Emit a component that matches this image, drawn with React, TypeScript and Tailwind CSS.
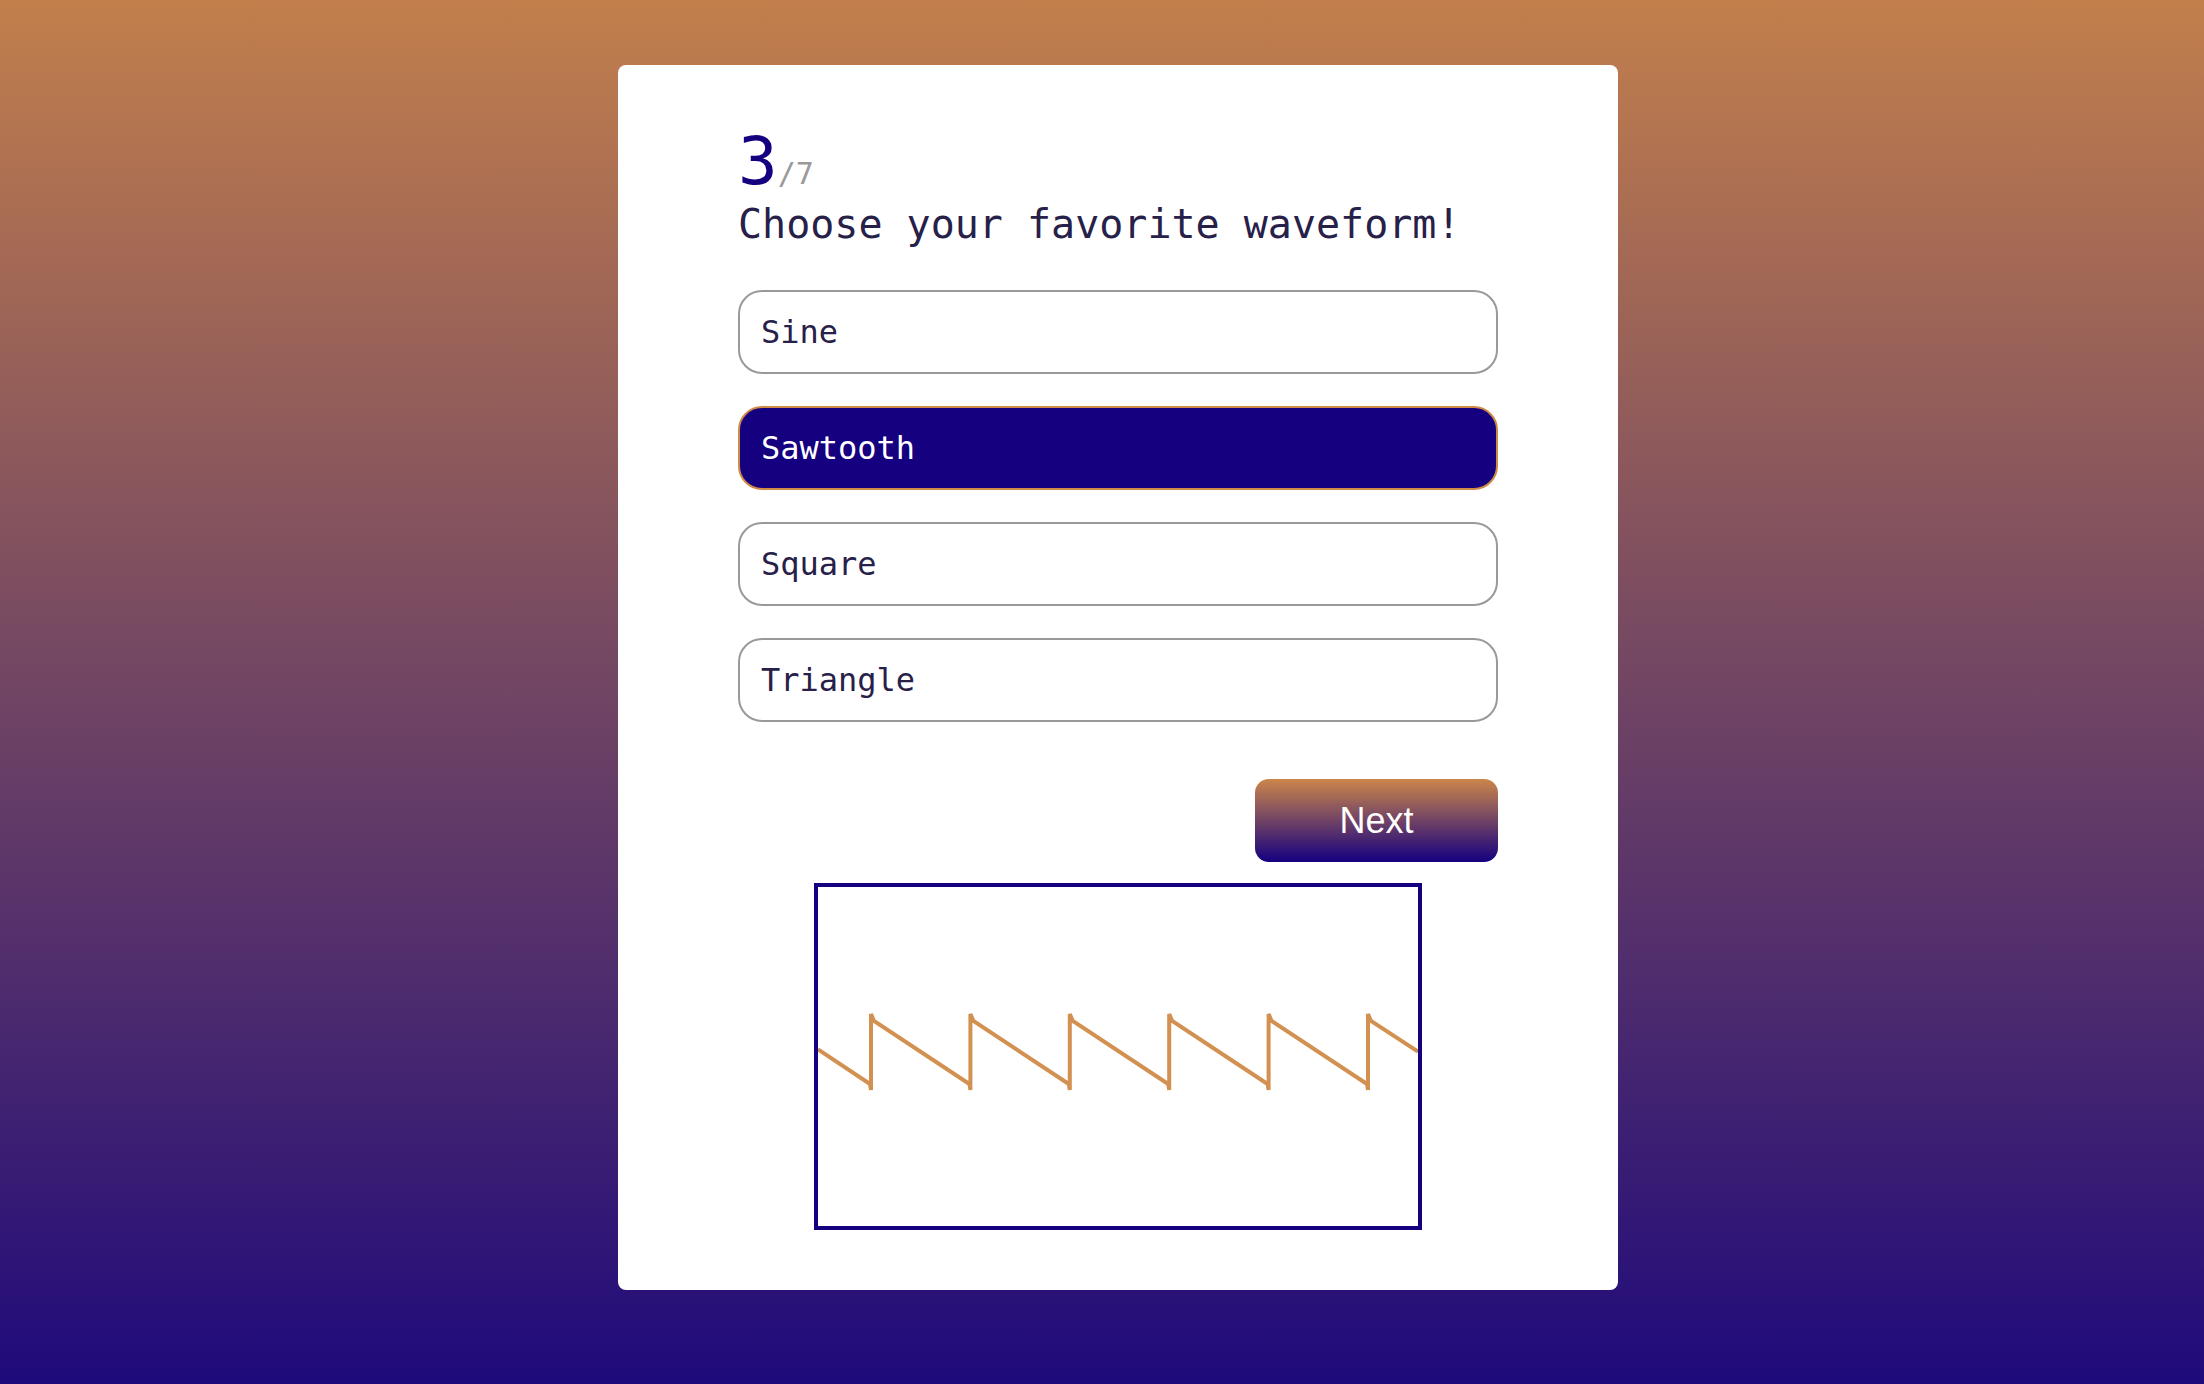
import { useState } from "react";

const OPTIONS = ["Sine", "Sawtooth", "Square", "Triangle"] as const;

// sawtooth trace, drawn in the 600x339 inner area of the scope box
function sawPath() {
  const period = 99.4;
  const first = 53;
  const top = 132;
  const bottom = 197;
  const slope = (bottom - top) / period;
  let d = `M0,${(bottom - first * slope).toFixed(1)}`;
  for (let i = 0; i < 6; i++) {
    const x = first + i * period;
    d += ` L${(x - 1).toFixed(1)},${bottom} L${x.toFixed(1)},${bottom + 6}`;
    d += ` L${x.toFixed(1)},${top - 5} L${(x + 3).toFixed(1)},${top + 2}`;
  }
  const last = first + 5 * period;
  d += ` L600,${(top + (600 - last) * slope).toFixed(1)}`;
  return d;
}

export default function App() {
  const [selected, setSelected] = useState<string>("Sawtooth");

  return (
    <div className="min-h-screen w-full bg-[linear-gradient(to_bottom,#c27f4c,#1f0a7b)] flex justify-center pl-[32px] pt-[65px] pb-[94px]">
      <div className="w-[1000px] bg-white rounded-[8px] px-[120px] pt-[64px] pb-[60px] flex flex-col">
        <div className="leading-[66px] text-[66px] font-['DejaVu_Sans_Mono',monospace] text-[#150080]">
          3<span className="text-[30px] leading-none text-[#9a9a9a]">/7</span>
        </div>
        <h1 className="mt-[9px] text-[40px] leading-none font-['DejaVu_Sans_Mono',monospace] text-[#272048]">
          Choose your favorite waveform!
        </h1>

        <div className="mt-[46px] flex flex-col gap-[32px]">
          {OPTIONS.map((opt) => {
            const active = opt === selected;
            return (
              <button
                key={opt}
                type="button"
                onClick={() => setSelected(opt)}
                className={`h-[84px] w-full rounded-[24px] border-2 pl-[21px] text-left text-[32px] font-['DejaVu_Sans_Mono',monospace] ${
                  active
                    ? "bg-[#150080] border-[#d08a48] text-white"
                    : "bg-white border-[#999999] text-[#272048]"
                }`}
              >
                {opt}
              </button>
            );
          })}
        </div>

        <div className="mt-[57px] flex justify-end">
          <button
            type="button"
            className="h-[83px] w-[243px] rounded-[14px] bg-[linear-gradient(to_bottom,#cc864a,#150080)] text-white text-[36px] font-['Liberation_Sans',Arial,sans-serif]"
          >
            Next
          </button>
        </div>

        <div className="mt-[21px] flex justify-center">
          <div className="w-[608px] h-[347px] border-4 border-[#150080] bg-white">
            <svg width="600" height="339" viewBox="0 0 600 339" className="block">
              <path
                d={sawPath()}
                fill="none"
                stroke="#d08a48"
                strokeWidth="4"
                strokeLinejoin="miter"
                strokeMiterlimit="2"
                opacity="0.95"
              />
            </svg>
          </div>
        </div>
      </div>
    </div>
  );
}
